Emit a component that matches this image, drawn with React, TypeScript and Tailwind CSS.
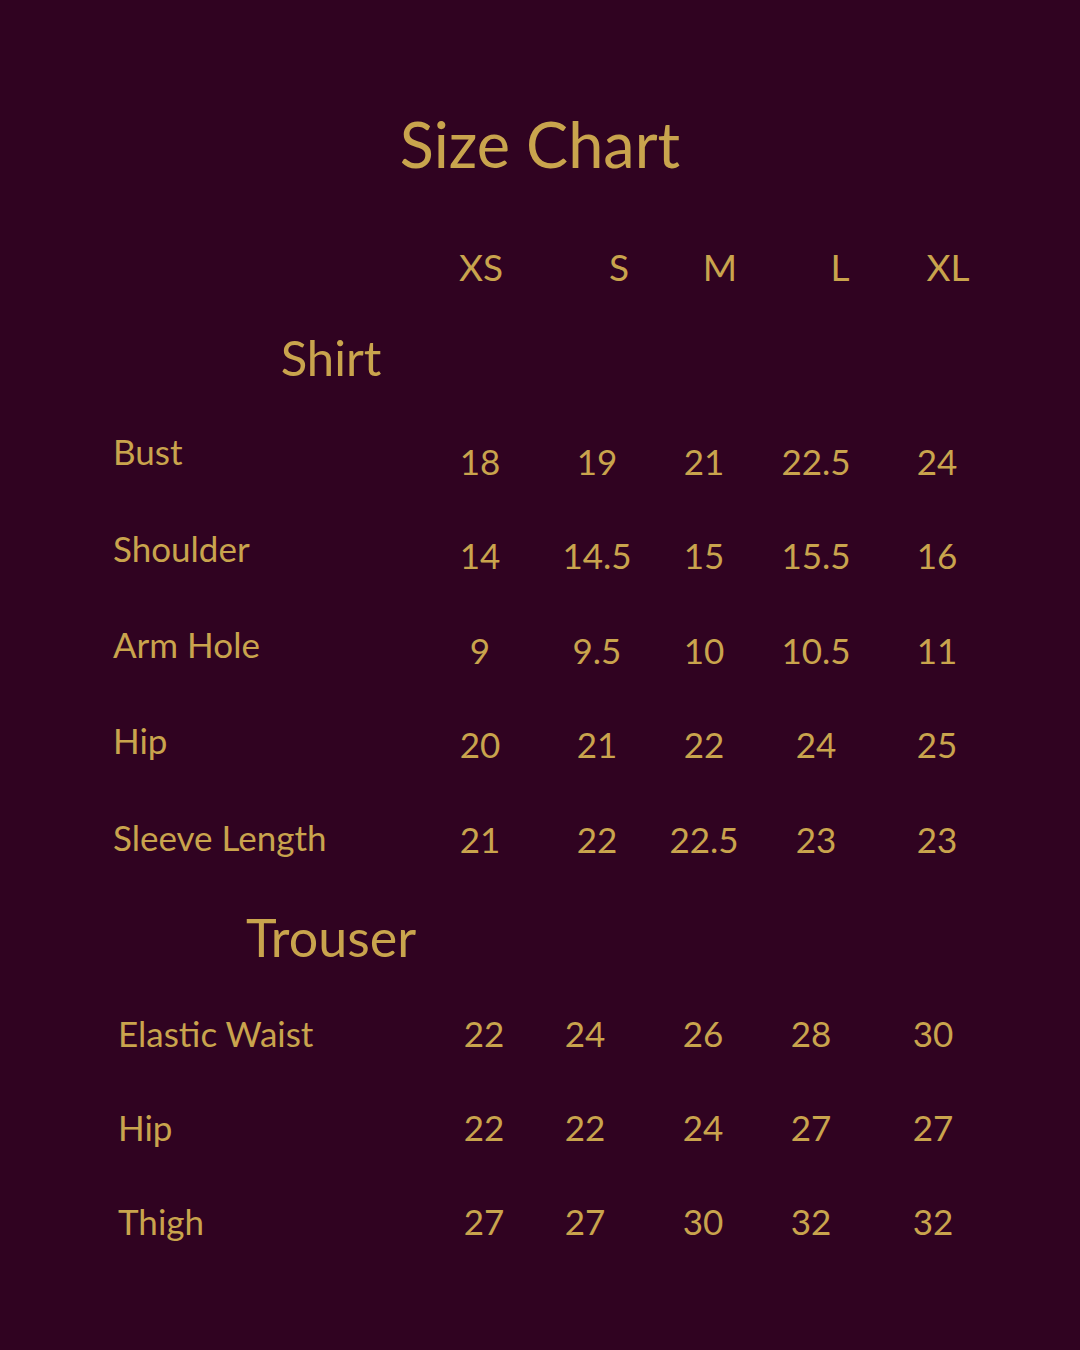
import React from "react"

const shirtRows = [
  { label: "Bust", shift: "pb-[20px]", values: ["18", "19", "21", "22.5", "24"] },
  { label: "Shoulder", shift: "pb-[14px]", values: ["14", "14.5", "15", "15.5", "16"] },
  { label: "Arm Hole", shift: "pb-[12px]", values: ["9", "9.5", "10", "10.5", "11"] },
  { label: "Hip", shift: "pb-[8px]", values: ["20", "21", "22", "24", "25"] },
  { label: "Sleeve Length", shift: "pb-[4px]", values: ["21", "22", "22.5", "23", "23"] },
]

const trouserRows = [
  { label: "Elastic Waist", values: ["22", "24", "26", "28", "30"] },
  { label: "Hip", values: ["22", "22", "24", "27", "27"] },
  { label: "Thigh", values: ["27", "27", "30", "32", "32"] },
]

const sizes = ["XS", "S", "M", "L", "XL"]

const Cell = ({ children }: { children: React.ReactNode }) => (
  <div className="flex justify-center whitespace-nowrap">{children}</div>
)

export default function App() {
  return (
    <div
      className="w-[1080px] h-[1350px] bg-[#300321] text-[#c9a44d] pt-[108px] overflow-hidden"
      style={{ fontFamily: "Lato, 'Noto Sans', sans-serif" }}
    >
      <h1 className="h-[70px] flex items-center justify-center text-[63px] leading-none">Size Chart</h1>

      {/* size header */}
      <div className="mt-[58px] h-[60px] grid grid-cols-[420px_122px_154px_48px_192px_24px] items-center text-[37px] leading-none">
        <div />
        {sizes.map((s) => (
          <Cell key={s}>{s}</Cell>
        ))}
      </div>

      <div className="mt-[31px] h-[60px] w-[662px] flex items-center justify-center text-[49px] leading-none">
        Shirt
      </div>

      <div className="mt-[27px]">
        {shirtRows.map((row) => (
          <div
            key={row.label}
            className="h-[94.5px] pl-[113px] grid grid-cols-[307px_120px_114px_100px_124px_118px] items-center text-[35px] leading-none"
          >
            <div className={`whitespace-nowrap ${row.shift}`}>{row.label}</div>
            {row.values.map((v, i) => (
              <Cell key={i}>{v}</Cell>
            ))}
          </div>
        ))}
      </div>

      <div className="mt-[20px] h-[60px] w-[662px] flex items-center justify-center text-[52px] leading-none">
        Trouser
      </div>

      <div className="mt-[20px]">
        {trouserRows.map((row) => (
          <div
            key={row.label}
            className="h-[94px] pl-[118px] grid grid-cols-[302px_128px_74px_162px_54px_190px] items-center text-[35px] leading-none"
          >
            <div className="whitespace-nowrap">{row.label}</div>
            {row.values.map((v, i) => (
              <Cell key={i}>{v}</Cell>
            ))}
          </div>
        ))}
      </div>
    </div>
  )
}
